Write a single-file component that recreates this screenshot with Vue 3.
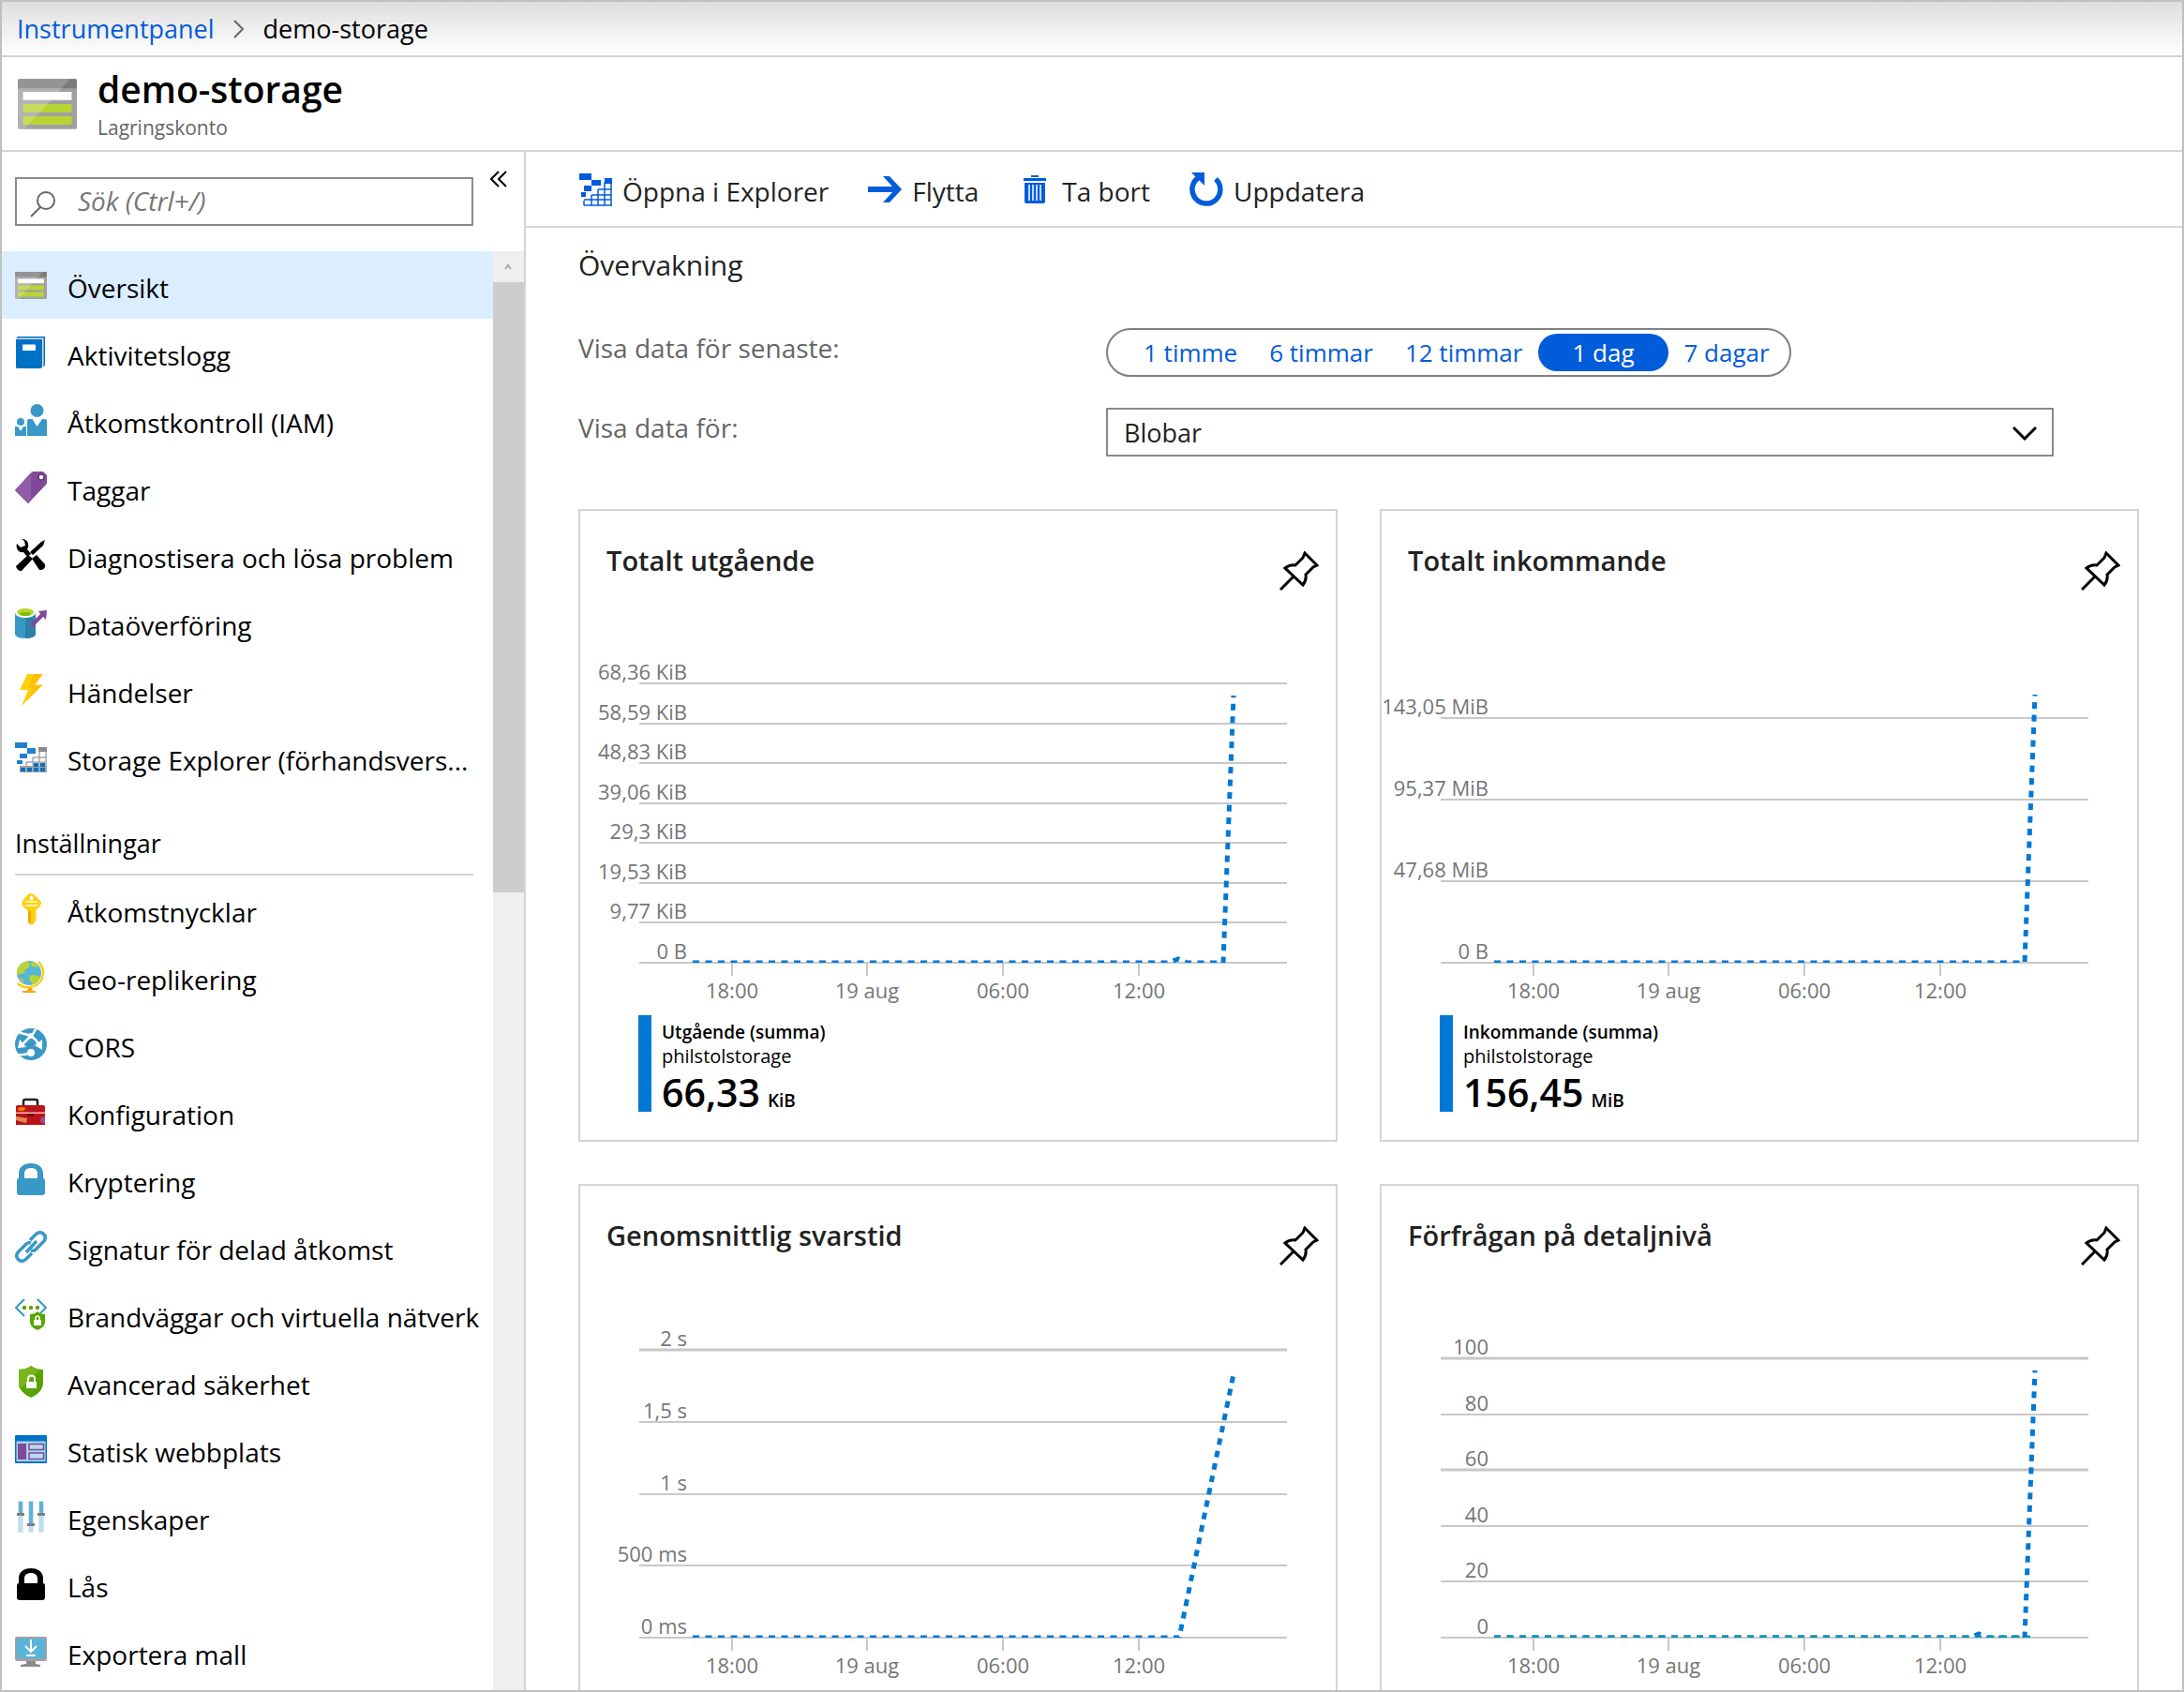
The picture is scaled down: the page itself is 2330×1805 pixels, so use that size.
<script setup>
import { ref } from 'vue'

const overviewItems = [
  { icon: 'storage', label: 'Översikt' },
  { icon: 'book', label: 'Aktivitetslogg' },
  { icon: 'people', label: 'Åtkomstkontroll (IAM)' },
  { icon: 'tag', label: 'Taggar' },
  { icon: 'tools', label: 'Diagnostisera och lösa problem' },
  { icon: 'transfer', label: 'Dataöverföring' },
  { icon: 'bolt', label: 'Händelser' },
  { icon: 'explorer', label: 'Storage Explorer (förhandsvers...' },
]

const settingsItems = [
  { icon: 'key', label: 'Åtkomstnycklar' },
  { icon: 'globe', label: 'Geo-replikering' },
  { icon: 'cors', label: 'CORS' },
  { icon: 'toolbox', label: 'Konfiguration' },
  { icon: 'lock-blue', label: 'Kryptering' },
  { icon: 'link', label: 'Signatur för delad åtkomst' },
  { icon: 'firewall', label: 'Brandväggar och virtuella nätverk' },
  { icon: 'shield', label: 'Avancerad säkerhet' },
  { icon: 'website', label: 'Statisk webbplats' },
  { icon: 'sliders', label: 'Egenskaper' },
  { icon: 'lock-black', label: 'Lås' },
  { icon: 'export', label: 'Exportera mall' },
]

const commands = [
  { icon: 'cmd-explorer', label: 'Öppna i Explorer' },
  { icon: 'cmd-move', label: 'Flytta' },
  { icon: 'cmd-delete', label: 'Ta bort' },
  { icon: 'cmd-refresh', label: 'Uppdatera' },
]

const ranges = ['1 timme', '6 timmar', '12 timmar', '1 dag', '7 dagar']
const range = ref('1 dag')
const service = ref('Blobar')
const search = ref('')
const selected = ref('Översikt')

const xTicks = [
  { x: 162, label: '18:00' },
  { x: 306, label: '19 aug' },
  { x: 451, label: '06:00' },
  { x: 596, label: '12:00' },
]

const charts = [
  {
    title: 'Totalt utgående',
    grid: [
      { y: 84, label: '68,36 KiB' },
      { y: 127, label: '58,59 KiB' },
      { y: 169, label: '48,83 KiB' },
      { y: 212, label: '39,06 KiB' },
      { y: 254, label: '29,3 KiB' },
      { y: 297, label: '19,53 KiB' },
      { y: 339, label: '9,77 KiB' },
      { y: 382, label: '0 B' },
    ],
    lines: [{ color: '#0078d4', points: '120,382 628,382 638,378 648,382 686,382 697,97' }],
    legend: { name: 'Utgående (summa)', value: '66,33', unit: 'KiB' },
  },
  {
    title: 'Totalt inkommande',
    grid: [
      { y: 121, label: '143,05 MiB' },
      { y: 208, label: '95,37 MiB' },
      { y: 295, label: '47,68 MiB' },
      { y: 382, label: '0 B' },
    ],
    lines: [{ color: '#0078d4', points: '120,382 686,382 697,96' }],
    legend: { name: 'Inkommande (summa)', value: '156,45', unit: 'MiB' },
  },
  {
    title: 'Genomsnittlig svarstid',
    grid: [
      { y: 75, label: '2 s', thick: true },
      { y: 152, label: '1,5 s' },
      { y: 229, label: '1 s' },
      { y: 305, label: '500 ms' },
      { y: 382, label: '0 ms' },
    ],
    lines: [{ color: '#0078d4', points: '120,382 639,382 697,101' }],
  },
  {
    title: 'Förfrågan på detaljnivå',
    grid: [
      { y: 84, label: '100', thick: true },
      { y: 144, label: '80' },
      { y: 203, label: '60', thick: true },
      { y: 263, label: '40' },
      { y: 322, label: '20' },
      { y: 382, label: '0' },
    ],
    lines: [
      { color: '#0078d4', points: '120,382 628,382 637,378 646,382 686,382 697,97' },
      { color: '#0a93b4', points: '120,382 692,382' },
    ],
  },
]
</script>

<template>
  <div class="portal">
    <svg class="sprite" aria-hidden="true">
      <symbol id="storage-art" viewBox="0 0 34 29">
        <rect width="34" height="29" rx="1" fill="#a0a0a0" />
        <path d="M1 0h32a1 1 0 0 1 1 1v4.500H0V1a1 1 0 0 1 1-1z" fill="#7a7a7a" />
        <path d="M3 7.500h28v4.700H3z" fill="#fff" />
        <path d="M3 14.500h28v4.800H3zM3 21.500h28v4.900H3z" fill="#b8d432" />
        <path d="M1 0h29L4 29H1a1 1 0 0 1-1-1V1a1 1 0 0 1 1-1z" fill="#fff" opacity=".2" />
      </symbol>
      <symbol id="storage" viewBox="0 0 34 34"><use href="#storage-art" x="0" y="3" width="34" height="29" /></symbol>
      <symbol id="book" viewBox="0 0 34 34">
        <path d="M3 0h29v31l-2 1V2H1.500z" fill="#0072c6" />
        <path d="M4 1.500h26.500V31l-2 1V3.500H2.500z" fill="#d6dde3" />
        <path d="M1 3h28v29.500L27.500 34H2l-1-1z" fill="#0072c6" />
        <rect x="8" y="8.500" width="14" height="6.500" rx="1" fill="#fff" />
      </symbol>
      <symbol id="people" viewBox="0 0 34 34">
        <g fill="#3999c6">
          <ellipse cx="23.500" cy="7" rx="7" ry="7" />
          <circle cx="6" cy="19" r="4" />
          <path d="M13 34V18q0-2 2-2h3.500l5 8 5.500-8h3q2 0 2 2v16zM0 34V24h3l3 5 3-5h3v10z" />
        </g>
      </symbol>
      <symbol id="tag" viewBox="0 0 34 34">
        <path d="M19 0h11l4 4v9L14 34 0 20z" fill="#804998" />
        <path d="M19 0h-1L0 20l14 14 3-3V0z" fill="#8f5ca7" />
        <circle cx="28" cy="6" r="3" fill="#fff" stroke="#5f3673" stroke-width="1.500" />
      </symbol>
      <symbol id="tools" viewBox="0 0 34 34">
        <path d="M7 0q6 0 7 5 1 3-1 6l4 5-4 3-4-5q-5 1-7-4-1-3 0-5l4 4 5-2-1-5zM1 29l13-12 5 4L7 34H5q-3-1-4-5z" fill="#000" />
        <path d="M32 1l-2 6-11 10-3-3L28 3zM18 21l5-4 9 10q1 5-4 6h-2z" fill="#000" />
      </symbol>
      <symbol id="transfer" viewBox="0 0 34 34">
        <path d="M0 6v24q2 4 11 4t11-4V6z" fill="#3999c6" />
        <path d="M11 6h11v24q-2 4-11 4z" fill="#2f80a8" />
        <ellipse cx="11" cy="6.500" rx="11" ry="5.500" fill="#fff" />
        <ellipse cx="11" cy="6" rx="9" ry="4" fill="#b8d432" />
        <ellipse cx="11" cy="8" rx="6" ry="2" fill="#7fba00" />
        <path d="M34 4l-1 10-3-3-11 11-3-3 11-11-2-3z" fill="#804998" />
      </symbol>
      <symbol id="bolt" viewBox="0 0 34 34">
        <path d="M13 0h16.500L21 12l8.500-.5L7 34l7-17H5z" fill="#fdd00e" />
        <path d="M20 0h9.500L21 12l8.500-.5L12 29l8-14h-6z" fill="#ffb900" opacity=".8" />
      </symbol>
      <symbol id="explorer" viewBox="0 0 34 34">
        <path d="M0 1h13v6H0zM13 7h9v6h-9zM5 13h8v5H5zM2 20h6v4H2z" fill="#2280ce" />
        <path d="M5 26h29v7H5z" fill="#a0a0a0" />
        <path d="M25 6h9v5h-9z" fill="#8a8a8a" />
        <path d="M26 11v22M33 11v22M19 17v16M12 22v11M19 17h14M12 22h21" fill="none" stroke="#a8a8a8" stroke-width="1.500" />
        <path d="M6 28h5v4H6zM13 28h5v4h-5zM20 28h5v4h-5zM27 28h5v4h-5zM20 23h5v4h-5zM27 23h5v4h-5z" fill="#0072c6" />
      </symbol>
      <symbol id="key" viewBox="0 0 34 34">
        <path d="M14 1q3-2 6 0l7 7q2 2 0 5l-5 6v2l1 1-1 2 1 1-1 2 1 1-2 2v1l-3 3-4-3V19l-6-6q-2-3 0-5z" fill="#fdd00e" />
        <path d="M14 19h3v14l-3-2z" fill="#f5a800" />
        <path d="M11 9h13M11 13h13" stroke="#fff3b0" stroke-width="2" />
        <ellipse cx="17.500" cy="5" rx="2" ry="2.500" fill="#fff" />
      </symbol>
      <symbol id="globe" viewBox="0 0 34 34">
        <circle cx="15" cy="13" r="13" fill="#59b4d9" />
        <path d="M3 8Q7 1 14 0l2 4-2 4-3 1-1 4-5 1-3 2q-1-4 1-8zM17 1q5 1 8 5l-3 1-4-1zM15 16l6-1 6 2q-2 6-8 8l-3-4zM4 18l4 1 2 5q-4-2-6-6z" fill="#b8d432" />
        <path d="M25 1q5 5 5 12-1 13-14 15Q8 29 3 24" fill="none" stroke="#fdd00e" stroke-width="2.500" />
        <path d="M14 29h4l1 3h3v2H8v-2h5z" fill="#f5a800" />
      </symbol>
      <symbol id="cors" viewBox="0 0 34 34">
        <circle cx="17" cy="17" r="17" fill="#3999c6" />
        <g fill="none" stroke="#fff" stroke-width="2.500">
          <path d="M5 5q8 1 13 4t7 8M22 1q-2 5-6 8l-8 8M3 28q6 1 14-2" />
        </g>
        <circle cx="17" cy="8" r="3" fill="#fff" />
        <circle cx="17" cy="26" r="4" fill="#fff" />
        <path d="M5 12l7 8-9 1zM29 12v11l-8-5z" fill="#fff" />
      </symbol>
      <symbol id="toolbox" viewBox="0 0 34 34">
        <path d="M9 11V6q0-2 2-2h11q2 0 2 2v5" fill="none" stroke="#222" stroke-width="2.500" />
        <path d="M1 12q0-2 2-2h27q2 0 2 2v19H1z" fill="#ba141a" />
        <path d="M1 17.500h31v1.500H1z" fill="#f4b8b8" />
        <rect x="13" y="19" width="7" height="3" fill="#7a0d10" />
        <ellipse cx="7" cy="14" rx="4" ry="2" fill="#f57c00" />
        <path d="M1 22l12 2-1 5-11-3z" fill="#e38b55" />
        <path d="M32 22q-5 0-5 4t5 3z" fill="#9b4f96" />
      </symbol>
      <symbol id="lock" viewBox="0 0 34 34">
        <path d="M4 16v-5C4 4 9 0 17 0s13 4 13 11v5q2 0 2 3v12q0 3-3 3H5q-3 0-3-3V19q0-3 2-3zm6 0h14v-5c0-4-3-6-7-6s-7 2-7 6z" />
      </symbol>
      <symbol id="lock-blue" viewBox="0 0 34 34"><use href="#lock" fill="#3999c6" width="34" height="34" /></symbol>
      <symbol id="lock-black" viewBox="0 0 34 34"><use href="#lock" fill="#000" width="34" height="34" /></symbol>
      <symbol id="link" viewBox="0 0 34 34">
        <g fill="none" stroke="#3999c6" stroke-width="3.500">
          <path d="M16 10l6-6q4-4 8-1t1 8l-9 9q-2 2-5 1" />
          <path d="M18 24l-6 6q-4 4-8 1t-1-8l9-9q2-2 5-1" />
          <path d="M12 23L23 11" />
        </g>
      </symbol>
      <symbol id="firewall" viewBox="0 0 34 34">
        <path d="M10 1L1 10l9 9M24 1l9 9-6 6" fill="none" stroke="#3999c6" stroke-width="2" />
        <g fill="#57a300"><circle cx="10" cy="10" r="2.200" /><circle cx="17" cy="10" r="2.200" /><circle cx="24" cy="10" r="2.200" /></g>
        <path d="M16 17q5 0 8-3 3 3 8 3v8q0 6-8 9-8-3-8-9z" fill="#57a300" />
        <path d="M20 23h8v6h-8z" fill="#fff" />
        <path d="M22 23v-2q0-2 2-2t2 2v2" fill="none" stroke="#fff" stroke-width="1.500" />
      </symbol>
      <symbol id="shield" viewBox="0 0 34 34">
        <path d="M4 4q8 0 13-4 5 4 13 4v15q0 9-13 15Q4 28 4 19z" fill="#57a300" />
        <path d="M4 4q8 0 13-4 4 3 10 4L5 25q-1-3-1-6z" fill="#7ab51d" />
        <path d="M12 17h11v7H12z" fill="#fff" />
        <path d="M14 17v-3q0-3.500 3.500-3.500T21 14v3" fill="none" stroke="#fff" stroke-width="2" />
      </symbol>
      <symbol id="website" viewBox="0 0 34 34">
        <rect y="2" width="34" height="30" rx="1" fill="#0072c6" />
        <path d="M1.500 8.500h31V30h-31z" fill="#a9d3ea" />
        <path d="M3 11h9v17H3z" fill="#804998" />
        <path d="M15 11.500h15.500v6H15zM15 21h15.500v6.500H15z" fill="#b3dcf0" stroke="#804998" stroke-width="1.500" />
      </symbol>
      <symbol id="sliders" viewBox="0 0 34 34">
        <path d="M3 0h6v34H3zM14 0h6v34h-6zM25 0h6v34h-6z" fill="#e4e4e4" />
        <path d="M4 1h4v32H4zM15 1h4v32h-4zM26 1h4v32h-4z" fill="#b9e0f2" />
        <path d="M4 1h4v12H4zM15 1h4v23h-4zM26 1h4v12h-4z" fill="#59b4d9" />
        <path d="M2 13h8v3H2zM13 24h8v3h-8zM24 13h8v3h-8z" fill="#808080" />
      </symbol>
      <symbol id="export" viewBox="0 0 34 34">
        <path d="M12 26h10v4l5 1v2H6v-2l6-1z" fill="#8a8a8a" />
        <rect y="1" width="34" height="26" rx="2" fill="#a0a1a2" />
        <path d="M2 3h30v21H2z" fill="#59b4d9" />
        <path d="M17 4v12M11 11l6 6 6-6M12 21h10" fill="none" stroke="#fff" stroke-width="2" />
      </symbol>

      <symbol id="cmd-explorer" viewBox="0 0 36 36">
        <path d="M1 1h13v7H1zM14 8h10v6H14zM6 14h8v6H6zM3 21h5v5H3zM28 6h8v6h-8z" fill="#015cda" />
        <path d="M28 10v25M35 10v25M21 18v17M14 24v11M6 30v5M21 18h14M14 24h21M6 29h29M6 35h30" fill="none" stroke="#015cda" stroke-width="1.500" />
      </symbol>
      <symbol id="cmd-move" viewBox="0 0 36 36">
        <path d="M0 15h26L16 4h7l13 14-13 14h-7l10-11H0z" fill="#015cda" />
      </symbol>
      <symbol id="cmd-delete" viewBox="0 0 36 36">
        <path d="M14 3h8v2h-8zM6 6h24v3H6zM7 11h22v20q0 2-2 2H9q-2 0-2-2z" fill="#015cda" />
        <path d="M12 13v17M16 13v17M20 13v17M24 13v17" stroke="#fff" stroke-width="1.500" />
      </symbol>
      <symbol id="cmd-refresh" viewBox="0 0 36 36">
        <path d="M9 6A15 15 0 1 0 28 7" fill="none" stroke="#015cda" stroke-width="5.500" />
        <path d="M2 0h14v14z" fill="#015cda" />
      </symbol>
    </svg>

    <nav class="breadcrumb" aria-label="Sökväg">
      <a href="#">Instrumentpanel</a>
      <svg class="crumb-arrow" viewBox="0 0 12 20" aria-hidden="true"><path d="M1 1l9 9-9 9" /></svg>
      <span>demo-storage</span>
    </nav>

    <header class="resource">
      <svg class="resource-icon" aria-hidden="true"><use href="#storage-art" /></svg>
      <div>
        <h1>demo-storage</h1>
        <p>Lagringskonto</p>
      </div>
    </header>

    <div class="body">
      <aside class="sidebar">
        <div class="search-row">
          <label class="search">
            <svg viewBox="0 0 28 28" aria-hidden="true"><circle cx="17" cy="10" r="9" /><path d="M11 17L1 27" /></svg>
            <input v-model="search" type="text" placeholder="Sök (Ctrl+/)" aria-label="Sök" />
          </label>
          <button class="collapse" type="button" aria-label="Dölj meny">
            <svg viewBox="0 0 18 18" aria-hidden="true"><path d="M9 1L1 9l8 8M17 1L9 9l8 8" /></svg>
          </button>
        </div>
        <div class="menu-area">
          <nav class="menu" aria-label="Meny">
            <a
              v-for="item in overviewItems"
              :key="item.label"
              href="#"
              class="menu-item"
              :class="{ active: item.label === selected }"
              @click.prevent="selected = item.label"
            >
              <svg aria-hidden="true"><use :href="'#' + item.icon" /></svg>
              <span>{{ item.label }}</span>
            </a>
            <h2>Inställningar</h2>
            <a
              v-for="item in settingsItems"
              :key="item.label"
              href="#"
              class="menu-item"
              :class="{ active: item.label === selected }"
              @click.prevent="selected = item.label"
            >
              <svg aria-hidden="true"><use :href="'#' + item.icon" /></svg>
              <span>{{ item.label }}</span>
            </a>
          </nav>
          <div class="scrollbar" aria-hidden="true">
            <svg class="scroll-arrow" viewBox="0 0 33 33"><path d="M13 19l3-4 3 4" /></svg>
            <div class="thumb"></div>
          </div>
        </div>
      </aside>

      <main class="content">
        <div class="commands" role="toolbar">
          <button v-for="c in commands" :key="c.label" type="button">
            <svg aria-hidden="true"><use :href="'#' + c.icon" /></svg>
            <span>{{ c.label }}</span>
          </button>
        </div>

        <section class="monitoring">
          <h2>Övervakning</h2>
          <div class="field">
            <span id="range-label" class="field-label">Visa data för senaste:</span>
            <div class="range" role="radiogroup" aria-labelledby="range-label">
              <label v-for="r in ranges" :key="r" :class="{ on: r === range }">
                <input v-model="range" type="radio" name="range" :value="r" />{{ r }}
              </label>
            </div>
          </div>
          <div class="field">
            <label class="field-label" for="service">Visa data för:</label>
            <div class="dropdown">
              <select id="service" v-model="service">
                <option>Blobar</option>
              </select>
              <svg viewBox="0 0 26 16" aria-hidden="true"><path d="M1 2l12 12L25 2" /></svg>
            </div>
          </div>

          <div class="cards">
            <article v-for="chart in charts" :key="chart.title" class="card">
              <div class="card-head">
                <h3>{{ chart.title }}</h3>
                <button type="button" class="pin" :aria-label="'Fäst ' + chart.title">
                  <svg viewBox="0 0 42 42" aria-hidden="true">
                    <path d="M27 2L40 15l-4 2-8 8q1 6-3 11L6 18q5-4 11-3l8-8zM15 27L1 41" />
                  </svg>
                </button>
              </div>
              <svg class="plot" viewBox="0 0 806 438" role="img" :aria-label="chart.title">
                <g class="grid">
                  <path v-for="g in chart.grid" :key="g.y" :class="{ thick: g.thick }" :d="`M63 ${g.y}H754`" />
                  <path v-for="t in xTicks" :key="t.x" :d="`M${t.x} 383v13`" />
                </g>
                <text v-for="g in chart.grid" :key="g.label" x="114" :y="g.y - 4" text-anchor="end">{{ g.label }}</text>
                <text v-for="t in xTicks" :key="t.label" :x="t.x" y="420" text-anchor="middle">{{ t.label }}</text>
                <svg width="806" height="382">
                  <polyline v-for="l in chart.lines" :key="l.color" class="series" :points="l.points" :stroke="l.color" />
                </svg>
              </svg>
              <div v-if="chart.legend" class="legend">
                <p class="legend-name">{{ chart.legend.name }}</p>
                <p class="legend-source">philstolstorage</p>
                <p class="legend-value">{{ chart.legend.value }}<span>{{ chart.legend.unit }}</span></p>
              </div>
            </article>
          </div>
        </section>
      </main>
    </div>
  </div>
</template>

<style>
body {
  margin: 0;
  background: #fff;
}
</style>

<style scoped>
.portal,
.portal *,
.portal *::before {
  box-sizing: border-box;
}

.portal {
  display: flex;
  flex-direction: column;
  height: 100vh;
  overflow: hidden;
  border: 2px solid #c0c0c0;
  background: #fff;
  color: #000;
  font-family: "Open Sans", "Noto Sans", sans-serif;
  font-size: 27px;
  line-height: 40px;
}

.portal h1,
.portal h2,
.portal h3,
.portal p {
  margin: 0;
}

.portal a {
  color: inherit;
  text-decoration: none;
}

.portal button,
.portal input,
.portal select {
  font: inherit;
  color: inherit;
}

.portal button {
  padding: 0;
  border: 0;
  background: none;
  cursor: pointer;
}

.sprite {
  display: none;
}

.breadcrumb {
  display: flex;
  flex: none;
  align-items: center;
  gap: 20px;
  height: 59px;
  padding-left: 16px;
  border-bottom: 2px solid #d4d4d4;
  background: linear-gradient(#dedede, #fff);
}

.portal .breadcrumb a {
  color: #015cda;
}

.crumb-arrow {
  width: 12px;
  height: 20px;
  fill: none;
  stroke: #666;
  stroke-width: 2;
}

.resource {
  display: flex;
  flex: none;
  gap: 22px;
  height: 101px;
  padding: 10px 17px 0;
  border-bottom: 2px solid #d4d4d4;
}

.resource-icon {
  width: 63px;
  height: 54px;
  margin-top: 13px;
}

.resource h1 {
  font-size: 39px;
  font-weight: 600;
  line-height: 48px;
}

.resource p {
  color: #666;
  font-size: 21px;
  line-height: 34px;
}

.body {
  display: flex;
  flex: 1;
  min-height: 0;
}

.sidebar {
  display: flex;
  flex: none;
  flex-direction: column;
  width: 559px;
  border-right: 2px solid #d4d4d4;
}

.search-row {
  display: flex;
  flex: none;
  align-items: flex-start;
  gap: 18px;
  height: 106px;
  padding: 20px 18px 0 14px;
}

.search {
  display: flex;
  flex: 1;
  align-items: center;
  gap: 23px;
  height: 52px;
  margin-top: 7px;
  padding: 0 14px;
  border: 2px solid #8a8a8a;
}

.search svg {
  flex: none;
  width: 28px;
  height: 28px;
  margin-top: 6px;
  fill: none;
  stroke: #666;
  stroke-width: 2;
}

.search input {
  flex: 1;
  min-width: 0;
  padding: 0;
  border: 0;
  outline: 0;
  background: none;
}

.search input::placeholder {
  color: #767676;
  font-size: 28px;
  font-style: italic;
  opacity: 1;
}

.collapse {
  display: flex;
}

.collapse svg {
  width: 18px;
  height: 18px;
  fill: none;
  stroke: #000;
  stroke-width: 2;
}

.menu-area {
  display: flex;
  flex: 1;
  min-height: 0;
}

.menu {
  flex: 1;
  overflow: hidden;
}

.menu-item {
  display: flex;
  align-items: center;
  gap: 22px;
  height: 72px;
  padding-left: 14px;
  font-size: 28px;
  white-space: nowrap;
}

.menu-item.active {
  background: #dbeeff;
}

.menu-item svg {
  flex: none;
  width: 34px;
  height: 34px;
}

.menu-item span {
  padding-top: 5px;
}

.menu h2 {
  height: 90px;
  margin: 0 21px 0 14px;
  padding-top: 36px;
  border-bottom: 2px solid #d4d4d4;
  font-size: 27px;
  font-weight: 500;
}

.scrollbar {
  flex: none;
  width: 33px;
  background: #efefef;
}

.scroll-arrow {
  display: block;
  width: 33px;
  height: 33px;
  fill: none;
  stroke: #aaa;
  stroke-width: 2;
}

.thumb {
  height: 651px;
  background: #cdcdcd;
}

.content {
  flex: 1;
  min-width: 0;
  overflow: hidden;
  color: #222;
}

.commands {
  display: flex;
  gap: 42px;
  height: 81px;
  padding-left: 56px;
  border-bottom: 2px solid #d4d4d4;
}

.commands button {
  display: flex;
  align-items: center;
  gap: 11px;
  font-size: 28px;
}

.commands svg {
  width: 36px;
  height: 36px;
}

.commands span {
  padding-top: 4px;
}

.monitoring {
  padding: 20px 46px 0 56px;
}

.monitoring h2 {
  margin-bottom: 47px;
  font-size: 30px;
  font-weight: 400;
}

.field {
  display: flex;
  align-items: flex-start;
  height: 52px;
  margin: 0 91px 33px 0;
}

.field-label {
  flex: none;
  width: 563px;
  padding-top: 1px;
  color: #666;
  font-size: 28px;
}

.range {
  display: flex;
  align-items: center;
  height: 52px;
  padding: 0 4px 0 21px;
  border: 2px solid #808080;
  border-radius: 26px;
  color: #015cda;
  font-size: 26px;
}

.range label {
  height: 40px;
  padding: 0 17px;
  border-radius: 20px;
  cursor: pointer;
  white-space: nowrap;
}

.range label.on {
  padding: 0 36px;
  background: #015cda;
  color: #fff;
}

.range input {
  position: absolute;
  opacity: 0;
  pointer-events: none;
}

.dropdown {
  position: relative;
  flex: 1;
}

.dropdown select {
  width: 100%;
  height: 52px;
  padding: 2px 17px 0;
  border: 2px solid #8a8a8a;
  border-radius: 0;
  background: #fff;
  appearance: none;
}

.dropdown svg {
  position: absolute;
  top: 19px;
  right: 18px;
  width: 26px;
  height: 16px;
  fill: none;
  stroke: #000;
  stroke-width: 3;
  pointer-events: none;
}

.cards {
  display: grid;
  grid-template-columns: 1fr 1fr;
  gap: 45px;
  padding-top: 23px;
}

.card {
  min-height: 675px;
  border: 2px solid #d4d4d4;
}

.card-head {
  display: flex;
  align-items: flex-start;
  justify-content: space-between;
  height: 100px;
  padding: 33px 18px 0 28px;
}

.card-head h3 {
  font-size: 29px;
  font-weight: 600;
}

.portal .pin {
  display: flex;
  padding-top: 10px;
}

.pin svg {
  width: 42px;
  height: 42px;
  fill: none;
  stroke: #000;
  stroke-width: 3;
}

.plot {
  display: block;
  width: 100%;
}

.plot text {
  fill: #767676;
  font-size: 22px;
}

.grid {
  fill: none;
  stroke: #c8c8c8;
  stroke-width: 2;
}

.grid .thick {
  stroke-width: 3;
}

.series {
  fill: none;
  stroke-width: 5;
  stroke-dasharray: 7 6.5;
}

.legend {
  height: 103px;
  margin-left: 62px;
  padding: 5px 0 0 11px;
  border-left: 14px solid #0078d4;
  color: #000;
  font-size: 20px;
  line-height: 26px;
}

.legend-name {
  font-size: 19px;
  font-weight: 600;
}

.legend-value {
  font-size: 41px;
  font-weight: 600;
  line-height: 50px;
}

.legend-value span {
  margin-left: 8px;
  font-size: 19px;
}
</style>
